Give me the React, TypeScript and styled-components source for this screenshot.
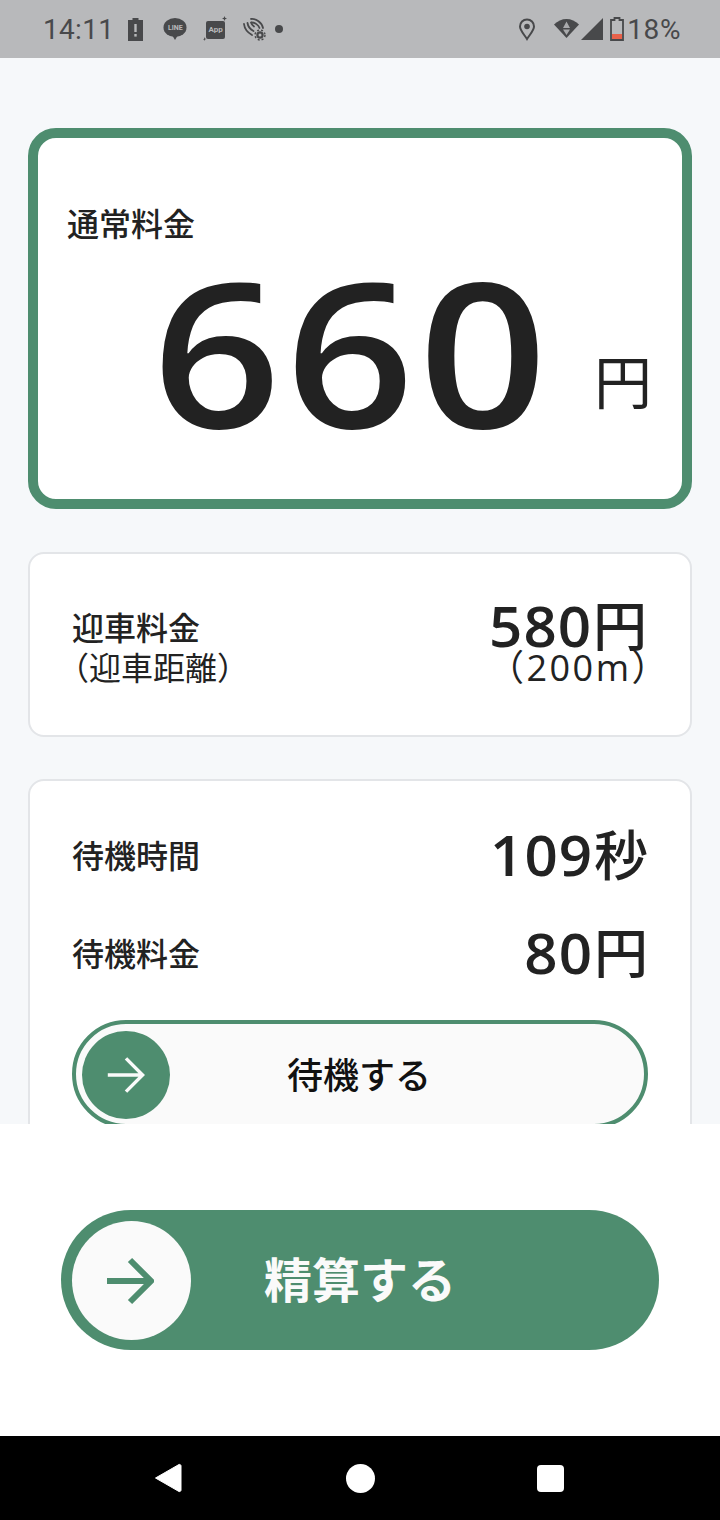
import React from 'react';
import styled, { createGlobalStyle } from 'styled-components';

const GREEN = '#4e8d6f';
const INK = '#222222';
const SANS = '"Noto Sans CJK JP", "Noto Sans", sans-serif';
const NUM = '"Open Sans", "Noto Sans CJK JP", sans-serif';
const STATUS = '#48494b';

const Global = createGlobalStyle`
  html, body { margin: 0; padding: 0; background: #fff; }
  * { box-sizing: border-box; }
`;

function ArrowIcon({ size, color, stroke }: { size: number; color: string; stroke: number }) {
  return (
    <svg width={size} height={size} viewBox="0 0 48 48" fill="none">
      <path d="M1 24H44M24 3L45 24L24 45" stroke={color} strokeWidth={stroke} strokeLinejoin="miter" />
    </svg>
  );
}

function StatusLeftIcons() {
  return (
    <>
      <AlertIcon width="17" height="24" viewBox="0 0 17 24">
        <path d="M5.500 1h6v2h4.500v21H1V3h4.500z" fill={STATUS} />
        <rect x="7.300" y="7" width="2.400" height="8" fill="#b8b9bb" />
        <rect x="7.300" y="17" width="2.400" height="2.600" fill="#b8b9bb" />
      </AlertIcon>
      <LineIcon>
        <svg width="24" height="24" viewBox="0 0 24 24">
          <ellipse cx="12" cy="10.500" rx="11.500" ry="9.500" fill={STATUS} />
          <path d="M9 18h6l-3 5z" fill={STATUS} />
        </svg>
        <LineLabel>LINE</LineLabel>
      </LineIcon>
      <AppIcon>
        <svg width="26" height="26" viewBox="0 0 26 26">
          <rect x="3" y="5" width="19" height="18" rx="2" fill={STATUS} />
          <path d="M21.500 0l.7 1.800 1.800.7-1.800.7-.7 1.800-.7-1.800-1.800-.7 1.800-.7zM1.500 21l.5 1.500 1.500.5-1.500.5-.5 1.500-.5-1.500L-.500 23.500 1 23z" fill={STATUS} />
        </svg>
        <AppLabel>App</AppLabel>
      </AppIcon>
      <WifiCallIcon width="24" height="24" viewBox="0 0 24 24" fill="none" stroke={STATUS} strokeWidth="1.800" strokeLinecap="round">
        <path d="M2 7c.5 4.500 3.500 8.500 8 11" />
        <path d="M5.500 6c.5 3.500 3 6.500 6 8" />
        <path d="M9 5.500c.5 1.500 1.500 3 3 4" />
        <path d="M9 2c5-.5 11 3.500 12 9" />
        <path d="M9.500 5.500c3.500 0 7 2.500 8 5.500" />
        <circle cx="18" cy="18" r="2.600" strokeWidth="2.200" />
        <circle cx="18" cy="18" r="5" strokeWidth="1.400" strokeDasharray="2 2" strokeLinecap="butt" />
      </WifiCallIcon>
      <Dot />
    </>
  );
}

function StatusRightIcons() {
  return (
    <>
      <svg width="18" height="24" viewBox="0 0 18 24" fill="none">
        <path d="M9 2.500C5 2.500 2 5.500 2 9.500c0 4 4.500 8.500 7 12.500 2.500-4 7-8.500 7-12.500 0-4-3-7-7-7z" stroke={STATUS} strokeWidth="2" />
        <circle cx="9" cy="9.500" r="2.800" fill={STATUS} />
      </svg>
      <WifiIcon width="27" height="24" viewBox="0 0 27 24">
        <path d="M1 7.500C4.500 4 9 2 13.500 2S22.500 4 26 7.500L13.500 21z" fill={STATUS} />
        <path d="M13.500 4.500L17 11H10zM10 12.500h7l-3.500 5.500z" fill="#a9aaac" />
      </WifiIcon>
      <SignalIcon width="22" height="22" viewBox="0 0 22 22">
        <path d="M22 0V22H0z" fill={STATUS} />
      </SignalIcon>
      <BatteryIcon width="14" height="24" viewBox="0 0 14 24" fill="none">
        <path d="M4.500 1h5v2h3.500v20H1V3h3.500z" stroke={STATUS} strokeWidth="1.800" />
        <rect x="2" y="17" width="10" height="5" fill="#e8614a" />
      </BatteryIcon>
      <StatusPercent>18%</StatusPercent>
    </>
  );
}

export default function App() {
  return (
    <Screen>
      <Global />
      <StatusBar>
        <StatusLeft>
          <StatusTime>14:11</StatusTime>
          <StatusLeftIcons />
        </StatusLeft>
        <StatusRight>
          <StatusRightIcons />
        </StatusRight>
      </StatusBar>

      <Scroll>
        <MainCard>
          <MainLabel>通常料金</MainLabel>
          <MainRow>
            <MainAmount>660</MainAmount>
            <MainUnit>円</MainUnit>
          </MainRow>
        </MainCard>

        <PickupCard>
          <PickupLeft>
            <RowLabel>迎車料金</RowLabel>
            <RowSub>（迎車距離）</RowSub>
          </PickupLeft>
          <PickupRight>
            <RowValue>
              <Digits>580</Digits>円
            </RowValue>
            <RowSubRight>（200m）</RowSubRight>
          </PickupRight>
        </PickupCard>

        <WaitCard>
          <WaitRow>
            <WaitLabel>待機時間</WaitLabel>
            <WaitValue>
              <Digits>109</Digits>秒
            </WaitValue>
          </WaitRow>
          <WaitRow>
            <WaitLabel>待機料金</WaitLabel>
            <WaitValue>
              <Digits>80</Digits>円
            </WaitValue>
          </WaitRow>
          <WaitSlider>
            <WaitKnob>
              <ArrowIcon size={38} color="#fafafa" stroke={4.4} />
            </WaitKnob>
            <WaitText>待機する</WaitText>
          </WaitSlider>
        </WaitCard>
      </Scroll>

      <Footer>
        <PaySlider>
          <PayKnob>
            <ArrowIcon size={48} color={GREEN} stroke={6} />
          </PayKnob>
          <PayText>精算する</PayText>
        </PaySlider>
      </Footer>

      <NavBar>
        <svg width="28" height="30" viewBox="0 0 28 30">
          <path d="M1.500 15L25 1.500a1.500 1.500 0 0 1 2 1.500V27a1.500 1.500 0 0 1-2 1.500z" fill="#fff" stroke="#fff" strokeLinejoin="round" />
        </svg>
        <NavCircle />
        <NavSquare />
      </NavBar>
    </Screen>
  );
}

const Screen = styled.div`
  width: 720px;
  height: 1520px;
  display: flex;
  flex-direction: column;
  overflow: hidden;
  font-family: ${SANS};
  color: ${INK};
`;

const StatusBar = styled.div`
  height: 58px;
  flex: none;
  background: #b8b9bb;
  display: flex;
  align-items: center;
  justify-content: space-between;
  padding: 0 39px 0 43px;
`;

const StatusLeft = styled.div`
  display: flex;
  align-items: center;
  gap: 16px;
`;

const StatusRight = styled.div`
  display: flex;
  align-items: center;
`;

const StatusTime = styled.span`
  font-family: Roboto, sans-serif;
  font-size: 28px;
  color: ${STATUS};
  letter-spacing: 0.3px;
`;

const AlertIcon = styled.svg`
  margin-left: -3px;
  margin-right: 3px;
`;

const LineIcon = styled.div`
  position: relative;
  width: 24px;
  height: 24px;
`;

const LineLabel = styled.span`
  position: absolute;
  left: 0;
  right: 0;
  top: 6px;
  text-align: center;
  font-family: Roboto, sans-serif;
  font-size: 7px;
  line-height: 10px;
  font-weight: 700;
  color: #b8b9bb;
`;

const AppIcon = styled.div`
  position: relative;
  width: 26px;
  height: 26px;
`;

const AppLabel = styled.span`
  position: absolute;
  left: 3px;
  width: 19px;
  top: 9px;
  text-align: center;
  font-family: Roboto, sans-serif;
  font-size: 8px;
  line-height: 10px;
  font-weight: 700;
  color: #b8b9bb;
`;

const WifiCallIcon = styled.svg`
  margin-left: -3px;
`;

const Dot = styled.span`
  width: 8px;
  height: 8px;
  border-radius: 50%;
  background: ${STATUS};
  margin-left: -7px;
`;

const WifiIcon = styled.svg`
  margin-left: 17px;
`;

const SignalIcon = styled.svg`
  margin-left: 1px;
`;

const BatteryIcon = styled.svg`
  margin-left: 7px;
`;

const StatusPercent = styled.span`
  font-family: Roboto, sans-serif;
  font-size: 28px;
  letter-spacing: 0.6px;
  color: ${STATUS};
  margin-left: 3px;
`;

const Scroll = styled.div`
  height: 1066px;
  flex: none;
  overflow: hidden;
  background: #f6f8fa;
  padding: 70px 28px 0;
  display: flex;
  flex-direction: column;
  gap: 43px;
`;

const MainCard = styled.section`
  height: 381px;
  flex: none;
  background: #fff;
  border: 10px solid ${GREEN};
  border-radius: 28px;
  padding: 61px 30px 0 29px;
`;

const MainLabel = styled.div`
  font-size: 32px;
  line-height: 46px;
  font-weight: 500;
`;

const MainRow = styled.div`
  display: flex;
  align-items: flex-end;
  justify-content: flex-end;
  margin-top: 12px;
`;

const MainAmount = styled.div`
  font-family: ${NUM};
  font-size: 201px;
  line-height: 186px;
  font-weight: 560;
  letter-spacing: 4px;
  transform: scaleX(1.12);
  transform-origin: right center;
`;

const MainUnit = styled.div`
  font-size: 58px;
  line-height: 70px;
  margin-left: 42px;
  margin-bottom: 29px;
`;

const Card = styled.section`
  flex: none;
  background: #fff;
  border: 2px solid #e3e5e8;
  border-radius: 16px;
`;

const PickupCard = styled(Card)`
  height: 185px;
  padding: 0 43px 0 42px;
  display: flex;
  align-items: center;
  justify-content: space-between;
`;

const PickupLeft = styled.div`
  display: flex;
  flex-direction: column;
  padding-top: 2px;
`;

const PickupRight = styled.div`
  display: flex;
  flex-direction: column;
  align-items: flex-end;
  padding-bottom: 15px;
`;

const RowLabel = styled.div`
  font-size: 32px;
  line-height: 40px;
  font-weight: 500;
`;

const WaitLabel = styled(RowLabel)`
  padding-bottom: 4px;
`;

const RowSub = styled.div`
  font-size: 32px;
  line-height: 40px;
  margin-left: -15px;
`;

const RowValue = styled.div`
  font-size: 54px;
  line-height: 62px;
  font-weight: 500;
`;

const WaitValue = styled(RowValue)`
  padding-bottom: 6px;
`;

const Digits = styled.span`
  display: inline-block;
  font-family: ${NUM};
  font-size: 56px;
  font-weight: 550;
  letter-spacing: 1px;
  margin-right: 1px;
  transform: scaleX(1.04);
  transform-origin: right center;
`;

const RowSubRight = styled.div`
  font-family: ${NUM};
  font-size: 36px;
  line-height: 26px;
  letter-spacing: 2.500px;
  margin-top: -1px;
  margin-right: -23px;
`;

const WaitCard = styled(Card)`
  height: 400px;
  margin-top: -1px;
  padding: 44px 42px 0 42px;
`;

const WaitRow = styled.div`
  height: 62px;
  display: flex;
  align-items: center;
  justify-content: space-between;
  margin-bottom: 36px;
`;

const WaitSlider = styled.div`
  position: relative;
  height: 108px;
  margin-top: -1px;
  border: 4px solid ${GREEN};
  border-radius: 54px;
  background: #fafafa;
  display: flex;
  align-items: center;
  justify-content: center;
`;

const WaitKnob = styled.div`
  position: absolute;
  left: 6px;
  top: 7px;
  width: 88px;
  height: 88px;
  border-radius: 50%;
  background: ${GREEN};
  display: flex;
  align-items: center;
  justify-content: center;
`;

const WaitText = styled.div`
  font-size: 36px;
  line-height: 44px;
  font-weight: 500;
  color: #111;
  margin-left: -2px;
  padding-bottom: 2px;
`;

const Footer = styled.div`
  height: 312px;
  flex: none;
  background: #fff;
  padding: 86px 61px 0;
`;

const PaySlider = styled.div`
  position: relative;
  height: 140px;
  border-radius: 70px;
  background: ${GREEN};
  display: flex;
  align-items: center;
  justify-content: center;
`;

const PayKnob = styled.div`
  position: absolute;
  left: 11px;
  top: 11px;
  width: 119px;
  height: 119px;
  border-radius: 50%;
  background: #fafafa;
  display: flex;
  align-items: center;
  justify-content: center;
  padding-right: 4px;
`;

const PayText = styled.div`
  font-size: 48px;
  line-height: 60px;
  font-weight: 700;
  color: #fafafa;
  padding-bottom: 7px;
`;

const NavBar = styled.div`
  height: 84px;
  flex: none;
  background: #000;
  display: flex;
  align-items: center;
  justify-content: space-between;
  padding: 0 156px 0 154px;
`;

const NavCircle = styled.span`
  width: 29px;
  height: 29px;
  border-radius: 50%;
  background: #fff;
  margin-left: 2px;
`;

const NavSquare = styled.span`
  width: 27px;
  height: 27px;
  border-radius: 4px;
  background: #fff;
`;
